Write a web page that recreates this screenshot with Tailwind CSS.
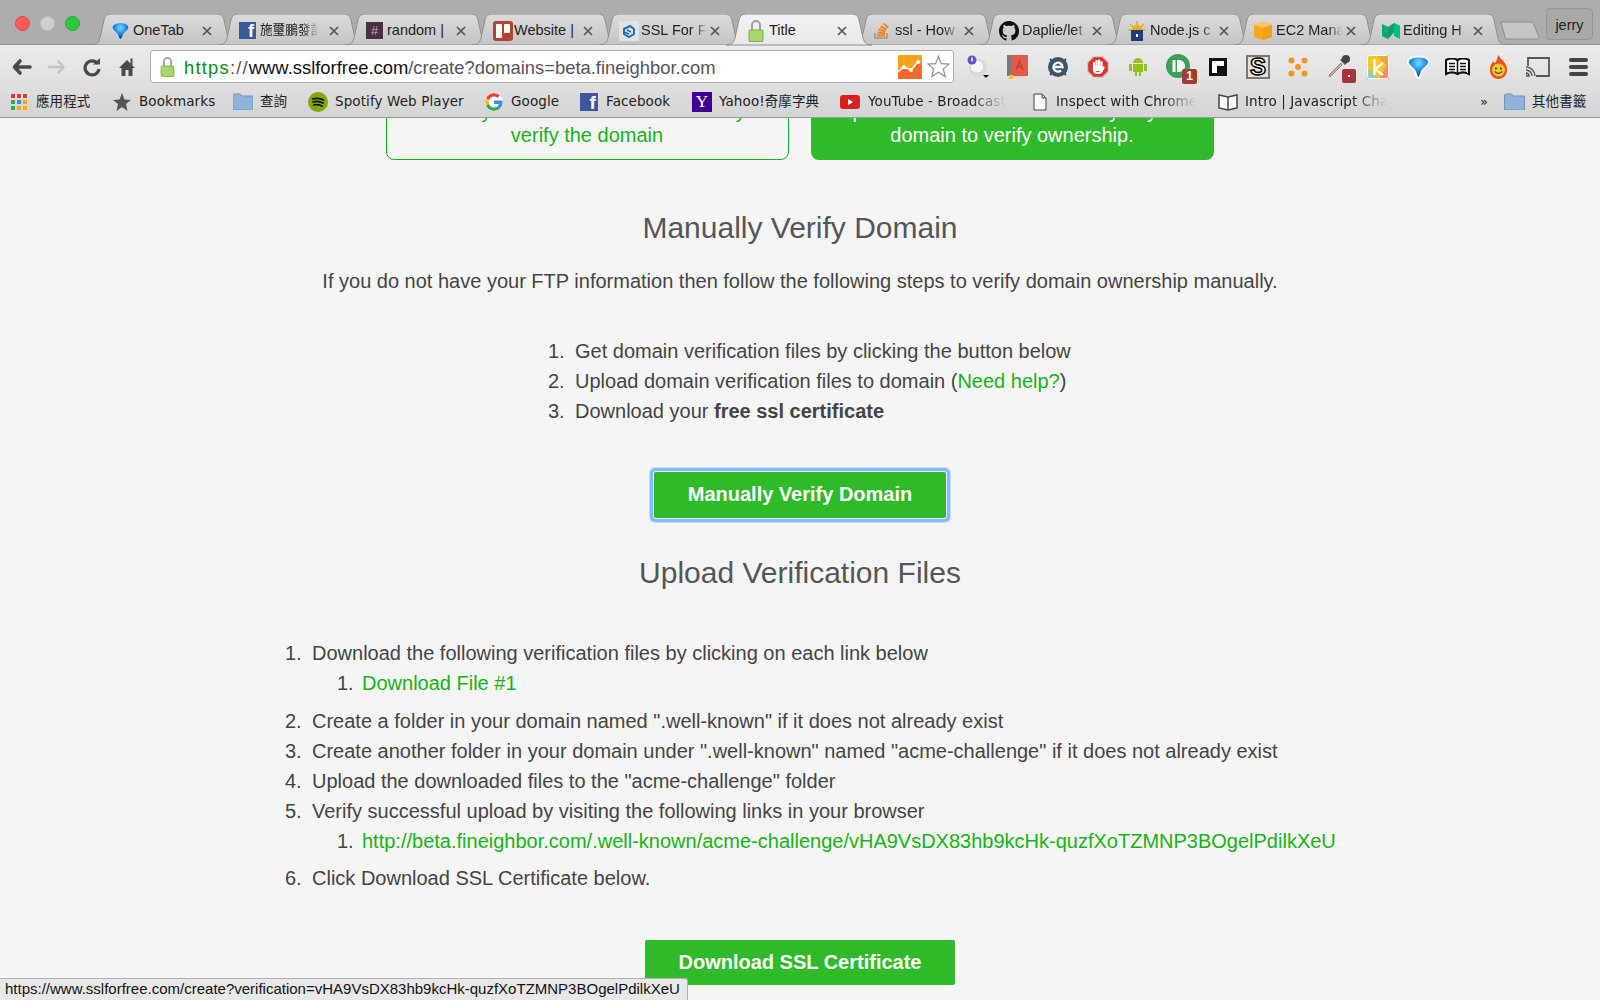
<!DOCTYPE html>
<html lang="en">
<head>
<meta charset="UTF-8">
<title>SSL For Free</title>
<script src="https://cdn.jsdelivr.net/npm/@tailwindcss/browser@4"></script>
</head>
<body class="h-[1000px] overflow-hidden bg-[#f5f5f5] font-['Liberation_Sans','Noto_Sans_CJK_TC',sans-serif]">

<!-- shared defs -->
<svg class="absolute w-0 h-0">
  <defs>
    <linearGradient id="tabBg" x1="0" y1="0" x2="0" y2="1"><stop offset="0" stop-color="#dcdcdc"/><stop offset="1" stop-color="#c4c4c4"/></linearGradient>
    <linearGradient id="tabOn" x1="0" y1="0" x2="0" y2="1"><stop offset="0" stop-color="#f2f2f2"/><stop offset="1" stop-color="#e9e9e9"/></linearGradient>
    <radialGradient id="gem" cx="0.5" cy="0.3" r="0.6"><stop offset="0" stop-color="#7fd8ff"/><stop offset="0.6" stop-color="#1f8fe6"/><stop offset="1" stop-color="#0b4f9e"/></radialGradient>
    <path id="tabShape" d="M0 31C6 31 8 28 9 24L13 6C14 2 16 0 21 0H125C130 0 132 2 133 6L137 24C138 28 140 31 146 31Z"/>
    <path id="close" d="M1 1L9 9M9 1L1 9" fill="none" stroke="#555" stroke-width="1.7"/>
    <path id="funnel" d="M1 7C1 3 6 1 12 1C18 1 23 3 23 7C23 10 19 12 16 16L13.500 22C12.800 23.500 11.200 23.500 10.500 22L8 16C5 12 1 10 1 7Z"/>
  </defs>
</svg>

<!-- tab strip -->
<div class="relative h-[45px] bg-[#adadad] border-b border-[#8f8f8f]">
  <div class="absolute left-[15px] top-[16px] flex gap-[10px]">
    <span class="w-[15px] h-[15px] rounded-full bg-[#fc5b57] border border-[#e24640]"></span>
    <span class="w-[15px] h-[15px] rounded-full bg-[#cfcfcf] border border-[#bdbdbd]"></span>
    <span class="w-[15px] h-[15px] rounded-full bg-[#2ac940] border border-[#1fae30]"></span>
  </div>
  <div class="flex pl-[100px] pt-[14px] text-[14.5px] text-[#222]">
    <!-- OneTab -->
    <div class="relative w-[127px] h-[31px] pt-[2px] shrink-0 flex items-center">
      <svg class="absolute left-[-9px] top-0 w-[146px] h-[31px]" viewBox="0 0 146 31"><use href="#tabShape" fill="url(#tabBg)" stroke="#8e8e8e"/></svg>
      <svg class="relative ml-[12px] w-[17px] h-[18px]" viewBox="0 0 24 24"><use href="#funnel" fill="url(#gem)"/></svg>
      <span class="relative ml-[4px] w-[69px] whitespace-nowrap">OneTab</span>
      <svg class="relative w-[10px] h-[10px]" viewBox="0 0 10 10"><use href="#close"/></svg>
    </div>
    <!-- Facebook -->
    <div class="relative w-[127px] h-[31px] pt-[2px] shrink-0 flex items-center">
      <svg class="absolute left-[-9px] top-0 w-[146px] h-[31px]" viewBox="0 0 146 31"><use href="#tabShape" fill="url(#tabBg)" stroke="#8e8e8e"/></svg>
      <span class="relative ml-[12px] w-[17px] h-[17px] bg-[#3b5998] text-white font-bold text-[18px] leading-[19px] text-right pr-[2px] overflow-hidden">f</span>
      <span class="relative ml-[4px] w-[69px] whitespace-nowrap text-[12.6px] [mask-image:linear-gradient(to_right,black_62%,transparent_88%)]">施璽鵬發訁</span>
      <svg class="relative w-[10px] h-[10px]" viewBox="0 0 10 10"><use href="#close"/></svg>
    </div>
    <!-- Slack -->
    <div class="relative w-[127px] h-[31px] pt-[2px] shrink-0 flex items-center">
      <svg class="absolute left-[-9px] top-0 w-[146px] h-[31px]" viewBox="0 0 146 31"><use href="#tabShape" fill="url(#tabBg)" stroke="#8e8e8e"/></svg>
      <span class="relative ml-[12px] w-[17px] h-[17px] bg-[#4a2f46] text-[#b9a9b6] text-[13px] leading-[17px] text-center">#</span>
      <span class="relative ml-[4px] w-[69px] whitespace-nowrap">random |</span>
      <svg class="relative w-[10px] h-[10px]" viewBox="0 0 10 10"><use href="#close"/></svg>
    </div>
    <!-- Trello -->
    <div class="relative w-[127px] h-[31px] pt-[2px] shrink-0 flex items-center">
      <svg class="absolute left-[-9px] top-0 w-[146px] h-[31px]" viewBox="0 0 146 31"><use href="#tabShape" fill="url(#tabBg)" stroke="#8e8e8e"/></svg>
      <svg class="relative ml-[12px] w-[20px] h-[20px]" viewBox="0 0 20 20"><rect width="20" height="20" rx="3" fill="#b04632"/><rect x="3" y="3" width="6" height="14" rx="1" fill="#fff"/><rect x="11" y="3" width="6" height="9" rx="1" fill="#fff"/></svg>
      <span class="relative ml-[1px] w-[69px] whitespace-nowrap">Website |</span>
      <svg class="relative w-[10px] h-[10px]" viewBox="0 0 10 10"><use href="#close"/></svg>
    </div>
    <!-- SSL For Free -->
    <div class="relative w-[127px] h-[31px] pt-[2px] shrink-0 flex items-center">
      <svg class="absolute left-[-9px] top-0 w-[146px] h-[31px]" viewBox="0 0 146 31"><use href="#tabShape" fill="url(#tabBg)" stroke="#8e8e8e"/></svg>
      <svg class="relative ml-[11px] w-[20px] h-[20px]" viewBox="0 0 20 20"><rect width="20" height="20" fill="#dfe3e6"/><path d="M5 8L11 5L15 8V13L10 16L5 13Z" fill="none" stroke="#1c6fb5" stroke-width="2"/><path d="M8 9L12 11M5 11L10 13" stroke="#1c6fb5" stroke-width="1.500"/></svg>
      <span class="relative ml-[2px] w-[69px] whitespace-nowrap [mask-image:linear-gradient(to_right,black_78%,transparent_95%)]">SSL For F</span>
      <svg class="relative w-[10px] h-[10px]" viewBox="0 0 10 10"><use href="#close"/></svg>
    </div>
    <!-- Active tab -->
    <div class="relative z-10 w-[127px] h-[31px] pt-[2px] shrink-0 flex items-center">
      <svg class="absolute left-[-9px] top-0 w-[146px] h-[32px]" viewBox="0 0 146 32"><use href="#tabShape" fill="url(#tabOn)" stroke="#8e8e8e"/></svg>
      <svg class="relative ml-[13px] w-[16px] h-[22px]" viewBox="0 0 16 22"><path d="M4 10V5A4 4 0 0 1 12 5V10" fill="none" stroke="#a0a0a0" stroke-width="2"/><rect x="1" y="10" width="14" height="11.500" rx="1" fill="#a6d66d" stroke="#7fae4b"/></svg>
      <span class="relative ml-[5px] w-[68px] whitespace-nowrap">Title</span>
      <svg class="relative w-[10px] h-[10px]" viewBox="0 0 10 10"><use href="#close"/></svg>
    </div>
    <!-- Stack Overflow -->
    <div class="relative w-[127px] h-[31px] pt-[2px] shrink-0 flex items-center">
      <svg class="absolute left-[-9px] top-0 w-[146px] h-[31px]" viewBox="0 0 146 31"><use href="#tabShape" fill="url(#tabBg)" stroke="#8e8e8e"/></svg>
      <svg class="relative ml-[12px] w-[17px] h-[17px]" viewBox="0 0 17 17"><path d="M1 11V16H13V11" fill="none" stroke="#999" stroke-width="1.500"/><path d="M3 13.500H11M3.500 10.500L11 11.500M4.500 7.500L11.500 9.500M6.500 4.500L12.500 7.500M9.500 1.500L14 5.500" stroke="#f48024" stroke-width="2"/></svg>
      <span class="relative ml-[4px] w-[69px] whitespace-nowrap [mask-image:linear-gradient(to_right,black_70%,transparent_95%)]">ssl - How</span>
      <svg class="relative w-[10px] h-[10px]" viewBox="0 0 10 10"><use href="#close"/></svg>
    </div>
    <!-- GitHub -->
    <div class="relative w-[127px] h-[31px] pt-[2px] shrink-0 flex items-center">
      <svg class="absolute left-[-9px] top-0 w-[146px] h-[31px]" viewBox="0 0 146 31"><use href="#tabShape" fill="url(#tabBg)" stroke="#8e8e8e"/></svg>
      <svg class="relative ml-[10px] w-[20px] h-[20px]" viewBox="0 0 16 16"><path fill="#111" d="M8 0C3.58 0 0 3.58 0 8c0 3.54 2.29 6.53 5.47 7.59.4.07.55-.17.55-.38 0-.19-.01-.82-.01-1.49-2.01.37-2.53-.49-2.69-.94-.09-.23-.48-.94-.82-1.13-.28-.15-.68-.52-.01-.53.63-.01 1.08.58 1.23.82.72 1.21 1.87.87 2.33.66.07-.52.28-.87.51-1.07-1.78-.2-3.64-.89-3.64-3.95 0-.87.31-1.59.82-2.15-.08-.2-.36-1.02.08-2.12 0 0 .67-.21 2.2.82.64-.18 1.32-.27 2-.27.68 0 1.36.09 2 .27 1.53-1.04 2.2-.82 2.2-.82.44 1.1.16 1.92.08 2.12.51.56.82 1.27.82 2.15 0 3.07-1.87 3.75-3.65 3.95.29.25.54.73.54 1.48 0 1.07-.01 1.93-.01 2.2 0 .21.15.46.55.38A8.013 8.013 0 0016 8c0-4.42-3.58-8-8-8z"/></svg>
      <span class="relative ml-[3px] w-[70px] whitespace-nowrap [mask-image:linear-gradient(to_right,black_75%,transparent_95%)]">Daplie/let</span>
      <svg class="relative w-[10px] h-[10px]" viewBox="0 0 10 10"><use href="#close"/></svg>
    </div>
    <!-- Node.js -->
    <div class="relative w-[127px] h-[31px] pt-[2px] shrink-0 flex items-center">
      <svg class="absolute left-[-9px] top-0 w-[146px] h-[31px]" viewBox="0 0 146 31"><use href="#tabShape" fill="url(#tabBg)" stroke="#8e8e8e"/></svg>
      <svg class="relative ml-[12px] w-[18px] h-[20px]" viewBox="0 0 18 20"><path d="M9 0V4M2 3L5 6M16 3L13 6M0 9H18" stroke="#f5a623" stroke-width="1.600"/><path d="M4 9A5 5 0 0 1 14 9Z" fill="#f5a623"/><rect x="3" y="9" width="12" height="11" fill="#1c3f78"/><rect x="8" y="13" width="2" height="3" fill="#fff"/></svg>
      <span class="relative ml-[4px] w-[69px] whitespace-nowrap [mask-image:linear-gradient(to_right,black_75%,transparent_95%)]">Node.js c</span>
      <svg class="relative w-[10px] h-[10px]" viewBox="0 0 10 10"><use href="#close"/></svg>
    </div>
    <!-- EC2 -->
    <div class="relative w-[127px] h-[31px] pt-[2px] shrink-0 flex items-center">
      <svg class="absolute left-[-9px] top-0 w-[146px] h-[31px]" viewBox="0 0 146 31"><use href="#tabShape" fill="url(#tabBg)" stroke="#8e8e8e"/></svg>
      <svg class="relative ml-[11px] w-[18px] h-[18px]" viewBox="0 0 18 18"><path d="M9 0L18 3V15L9 18L0 15V3Z" fill="#f7a81b"/><path d="M0 3L9 6L18 3L9 0Z" fill="#fbc75c"/><path d="M9 6V18L18 15V3Z" fill="#f0a010"/></svg>
      <span class="relative ml-[4px] w-[70px] whitespace-nowrap [mask-image:linear-gradient(to_right,black_75%,transparent_95%)]">EC2 Mana</span>
      <svg class="relative w-[10px] h-[10px]" viewBox="0 0 10 10"><use href="#close"/></svg>
    </div>
    <!-- Medium -->
    <div class="relative w-[127px] h-[31px] pt-[2px] shrink-0 flex items-center">
      <svg class="absolute left-[-9px] top-0 w-[146px] h-[31px]" viewBox="0 0 146 31"><use href="#tabShape" fill="url(#tabBg)" stroke="#8e8e8e"/></svg>
      <svg class="relative ml-[12px] w-[18px] h-[16px]" viewBox="0 0 18 16"><path d="M0 1L6 4V16L0 13Z" fill="#00ab6c"/><path d="M6 4L12 0L18 3L6 16Z" fill="#1c9963"/><path d="M12 0L18 3V16L12 13Z" fill="#00c27c"/></svg>
      <span class="relative ml-[3px] w-[70px] whitespace-nowrap [mask-image:linear-gradient(to_right,black_78%,transparent_95%)]">Editing H</span>
      <svg class="relative w-[10px] h-[10px]" viewBox="0 0 10 10"><use href="#close"/></svg>
    </div>
    <!-- new tab -->
    <svg class="relative ml-[3px] mt-[7px] w-[40px] h-[19px]" viewBox="0 0 40 19"><path d="M1 1H30C32 1 33 2 34 4L39 16C39 18 38 18 36 18H8C6 18 5 17 5 16Z" fill="#c6c6c6" stroke="#8e8e8e"/></svg>
  </div>
  <div class="absolute left-[1546px] top-[8px] w-[47px] h-[32px] rounded-[4px] bg-[#a9a9a9] border border-[#969696] text-[14.5px] leading-[32px] text-center text-[#222]">jerry</div>
</div>

<!-- toolbar -->
<div class="h-[43px] flex items-center pl-[12px] bg-[linear-gradient(#ececec,#dedede)]">
  <svg class="w-[20px] h-[20px]" viewBox="0 0 20 20"><path d="M8 4L2.500 10L8 16M3 10H18" fill="none" stroke="#4a4a4a" stroke-width="3.600" stroke-linecap="round" stroke-linejoin="round"/></svg>
  <svg class="ml-[15px] w-[19px] h-[20px]" viewBox="0 0 20 20"><path d="M12 4L17.500 10L12 16M17 10H2" fill="none" stroke="#c4c4c4" stroke-width="2.600" stroke-linecap="round" stroke-linejoin="round"/></svg>
  <svg class="ml-[17px] w-[18px] h-[20px]" viewBox="0 0 18 20"><path d="M14.500 6.500A7 7 0 1 0 16 12" fill="none" stroke="#4a4a4a" stroke-width="3.200"/><path d="M10 7.500H17V1Z" fill="#4a4a4a"/></svg>
  <svg class="ml-[18px] w-[16px] h-[18px]" viewBox="0 0 16 18"><path d="M8 2L0 10H2.500V18H6.500V12H9.500V18H13.500V10H16L13.500 7.500V0.500H11.500V5.500Z" fill="#4a4a4a"/></svg>
  <!-- address bar -->
  <div class="ml-[15px] w-[804px] h-[33px] flex items-center bg-white border border-[#ababab] rounded-[3px]">
    <svg class="ml-[9px] w-[15px] h-[20px]" viewBox="0 0 16 22"><path d="M4 10V5A4 4 0 0 1 12 5V10" fill="none" stroke="#a0a0a0" stroke-width="2"/><rect x="1" y="10" width="14" height="11.500" rx="1" fill="#a6d66d" stroke="#7fae4b"/></svg>
    <div class="ml-[9px] pt-[3px] text-[18.4px] whitespace-nowrap text-[#555]"><span class="tracking-[1.2px]"><span class="text-[#0b8a0b]">https</span>://</span><span class="text-[#111]">www.sslforfree.com</span>/create?domains=beta.fineighbor.com</div>
    <svg class="ml-auto w-[24px] h-[24px]" viewBox="0 0 24 24"><rect width="24" height="24" rx="1" fill="#f9a11b"/><path d="M0 24V17L6 12L13 15L20 7L24 10V24Z" fill="#f2692a"/><path d="M0 17L6 12L13 15L20 7" fill="none" stroke="#fff" stroke-width="1.600"/><circle cx="6" cy="12" r="2" fill="#fff"/><circle cx="13" cy="15" r="2" fill="#fff"/><circle cx="20" cy="7" r="2" fill="#fff"/></svg>
    <svg class="ml-[5px] mr-[3px] w-[23px] h-[23px]" viewBox="0 0 24 24"><path d="M12 1.500L15 9L23 9.500L17 14.500L19 22.500L12 18L5 22.500L7 14.500L1 9.500L9 9Z" fill="#fff" stroke="#8f8f8f" stroke-width="1.300"/></svg>
  </div>
  <!-- extensions -->
  <svg class="ml-[12px] w-[24px] h-[24px]" viewBox="0 0 24 24"><circle cx="12" cy="13" r="9" fill="#d8d8d8"/><circle cx="11" cy="11.500" r="6" fill="#f6f6f6"/><circle cx="6" cy="5" r="4.500" fill="#5a55d6"/><rect x="5.300" y="2.500" width="1.500" height="4" fill="#fff"/><path d="M17 20H23L20 23Z" fill="#111"/></svg>
  <svg class="ml-[17px] w-[21px] h-[24px]" viewBox="0 0 21 24"><rect x="0" y="0" width="5" height="21" fill="#7a7a7a"/><rect x="4" y="0" width="17" height="21" fill="#e65a4a"/><path d="M9 15L12.500 6L16 15M10.500 12H14.500" fill="none" stroke="#c8402f" stroke-width="1.500"/><rect x="0" y="21" width="21" height="3" fill="#f4d3cc"/><path d="M2 20H6V24H2Z" fill="#f5c518"/></svg>
  <svg class="ml-[18px] w-[24px] h-[24px]" viewBox="0 0 24 24"><path d="M4 4L7 7M20 4L17 7M4 20L7 17M20 20L17 17" stroke="#39576a" stroke-width="2"/><circle cx="12" cy="12" r="10" fill="#39576a"/><path d="M7.500 12H16.500A4.500 4.500 0 1 0 15 15.500" fill="none" stroke="#fff" stroke-width="2.400"/></svg>
  <svg class="ml-[17px] w-[22px] h-[22px]" viewBox="0 0 22 22"><path d="M6.500 0.500H15.500L21.500 6.500V15.500L15.500 21.500H6.500L0.500 15.500V6.500Z" fill="#d9352c" stroke="#c9c9c9" stroke-width="1.500"/><path d="M7 12V7M9.500 11V5M12 11V4.500M14.500 11V6M7 11V14C7 16 8.500 17 10.500 17H12C14 17 15 15 16.500 11.500" fill="none" stroke="#fff" stroke-width="2.200" stroke-linecap="round"/><rect x="8" y="10" width="7" height="5" fill="#fff"/></svg>
  <svg class="ml-[20px] w-[18px] h-[20px]" viewBox="0 0 18 20"><path d="M4 6A5 5 0 0 1 14 6ZM4 7H14V15H12V19H10V15H8V19H6V15H4ZM0 7H3V14H0ZM15 7H18V14H15Z" fill="#8fc31f"/></svg>
  <div class="relative ml-[19px] w-[31px] h-[30px] mt-[5px]">
    <svg class="w-[24px] h-[24px]" viewBox="0 0 24 24"><circle cx="12" cy="12" r="12" fill="#3d9e55"/><rect x="6.500" y="6" width="3" height="12" fill="#fff"/><path d="M11 6H13A6 6 0 0 1 13 18H11Z" fill="#fff"/></svg>
    <span class="absolute left-[16px] top-[15px] w-[15px] h-[15px] bg-[#a63a2e] text-white font-bold text-[12px] leading-[15px] text-center rounded-[2px]">1</span>
  </div>
  <svg class="ml-[12px] w-[18px] h-[18px]" viewBox="0 0 18 18"><rect width="18" height="18" fill="#111"/><path d="M3 3H15V8H8V15H3Z" fill="#fff"/></svg>
  <span class="ml-[19px] w-[24px] h-[24px] bg-[#e6e2d8] border-2 border-[#777] text-white font-bold text-[24px] leading-[20px] text-center [-webkit-text-stroke:1.5px_#000]">S</span>
  <svg class="ml-[18px] w-[20px] h-[20px]" viewBox="0 0 20 20"><g fill="#f7941d"><circle cx="3.500" cy="3.500" r="3"/><circle cx="16.500" cy="3.500" r="3"/><circle cx="10" cy="10" r="3"/><circle cx="3.500" cy="16.500" r="3"/><circle cx="16.500" cy="16.500" r="3"/></g></svg>
  <div class="relative ml-[19px] w-[29px] h-[30px] mt-[4px]">
    <svg class="w-[24px] h-[24px]" viewBox="0 0 24 24"><path d="M14 9L2 21L3 23L15 11Z" fill="#e8a0a0" stroke="#888"/><path d="M13 6L18 11L20 9L15 4Z" fill="#555"/><circle cx="19" cy="5" r="4" fill="#444"/></svg>
    <span class="absolute left-[15px] top-[15px] w-[14px] h-[14px] bg-[#a6343a] rounded-[2px]"></span>
    <span class="absolute left-[21px] top-[21px] w-[2px] h-[2px] bg-white"></span>
  </div>
  <svg class="ml-[11px] w-[22px] h-[24px]" viewBox="0 0 22 24"><rect width="22" height="24" rx="2" fill="#f6c52c"/><path d="M9 0H22V12Z" fill="#f3a33a"/><path d="M22 6V24H12Z" fill="#f08a6b"/><path d="M0 24V13L12 24Z" fill="#8fd0c4"/><rect x="0.500" y="0.500" width="21" height="23" rx="2" fill="none" stroke="#fff"/><path d="M7.500 4V20M16 8L8 14L16 20" fill="none" stroke="#fff" stroke-width="2.200"/></svg>
  <svg class="ml-[18px] w-[23px] h-[24px]" viewBox="0 0 24 24"><use href="#funnel" fill="url(#gem)" stroke="#fff" stroke-width="2"/></svg>
  <svg class="ml-[15px] w-[25px] h-[18px]" viewBox="0 0 25 18"><path d="M1 2C5 0 9 0 12.500 2C16 0 20 0 24 2V16C20 14 16 14 12.500 16C9 14 5 14 1 16Z" fill="#fff" stroke="#111" stroke-width="2.200"/><path d="M12.500 2V16M4 5.500H10M4 8.500H10M4 11.500H10M15 5.500H21M15 8.500H21M15 11.500H21" stroke="#111" stroke-width="1.500"/></svg>
  <svg class="ml-[19px] w-[19px] h-[24px]" viewBox="0 0 19 24"><path d="M9.500 0C11 4 17 7 18 13C19 20 14 24 9.500 24C5 24 0 20 1 13C1.500 10 3 9 4 6C5 8 6 8 7 7C8 5 8 2 9.500 0Z" fill="#e8501e"/><circle cx="9.500" cy="15" r="6.500" fill="#fbc531"/><circle cx="7" cy="13.500" r="1" fill="#333"/><circle cx="12" cy="13.500" r="1" fill="#333"/><path d="M6 16.500C7.500 19 11.500 19 13 16.500" fill="none" stroke="#333" stroke-width="1.100"/></svg>
  <svg class="ml-[18px] w-[24px] h-[20px]" viewBox="0 0 24 20"><path d="M2 9V1H23V19H10" fill="none" stroke="#555" stroke-width="1.800"/><path d="M0 19H3A3 3 0 0 0 0 16ZM0 13A6 6 0 0 1 6 19M0 10A9 9 0 0 1 9 19" fill="none" stroke="#555" stroke-width="1.400"/></svg>
  <div class="ml-[19px] w-[19px] flex flex-col gap-[3px]">
    <span class="h-[4px] rounded-full bg-[#444]"></span>
    <span class="h-[4px] rounded-full bg-[#444]"></span>
    <span class="h-[4px] rounded-full bg-[#444]"></span>
  </div>
</div>

<!-- bookmarks bar -->
<div class="h-[30px] pb-[2px] flex items-center pl-[11px] bg-[linear-gradient(#dedede,#d4d4d4)] border-b border-[#9c9c9c] font-['DejaVu_Sans','Noto_Sans_CJK_TC',sans-serif] text-[13.5px] tracking-[0.1px] text-[#222] whitespace-nowrap">
  <div class="w-[102px] shrink-0 flex items-center gap-[9px]">
    <svg class="w-[16px] h-[16px]" viewBox="0 0 16 16"><rect width="4" height="4" fill="#e0392b"/><rect x="6" width="4" height="4" fill="#e0392b"/><rect x="12" width="4" height="4" fill="#e0392b"/><rect y="6" width="4" height="4" fill="#34a853"/><rect x="6" y="6" width="4" height="4" fill="#4285f4"/><rect x="12" y="6" width="4" height="4" fill="#f9ab00"/><rect y="12" width="4" height="4" fill="#34a853"/><rect x="6" y="12" width="4" height="4" fill="#f9ab00"/><rect x="12" y="12" width="4" height="4" fill="#f9ab00"/></svg>
    <span>應用程式</span>
  </div>
  <div class="w-[120px] shrink-0 flex items-center gap-[8px]">
    <svg class="w-[18px] h-[18px]" viewBox="0 0 18 18"><path d="M9 0L11.500 6.500L18 7L13 11L14.500 18L9 14L3.500 18L5 11L0 7L6.500 6.500Z" fill="#555"/></svg>
    <span>Bookmarks</span>
  </div>
  <div class="w-[75px] shrink-0 flex items-center gap-[7px]">
    <svg class="w-[20px] h-[17px]" viewBox="0 0 20 17"><path d="M0 3C0 1 1 1 2 1H7L9 3H20V17H0Z" fill="#8fb4d9" stroke="#6f94b8"/></svg>
    <span>查詢</span>
  </div>
  <div class="w-[177px] shrink-0 flex items-center gap-[7px]">
    <svg class="w-[20px] h-[20px]" viewBox="0 0 20 20"><circle cx="10" cy="10" r="10" fill="#7fa800"/><path d="M4.500 7C8 6 12 6 15.500 8M5 10C8 9 12 9.500 15 11M5.500 13C8 12.300 11.500 12.500 14 14" fill="none" stroke="#111" stroke-width="1.700" stroke-linecap="round"/></svg>
    <span>Spotify Web Player</span>
  </div>
  <div class="w-[95px] shrink-0 flex items-center gap-[8px]">
    <svg class="w-[18px] h-[18px] rounded-full bg-white" viewBox="0 0 48 48"><path fill="#EA4335" d="M24 9.500c3.500 0 6.700 1.300 9.100 3.500l6.800-6.800C35.800 2.400 30.200 0 24 0 14.600 0 6.500 5.400 2.600 13.200l7.900 6.100C12.400 13.700 17.700 9.500 24 9.500z"/><path fill="#4285F4" d="M47 24.500c0-1.600-.2-3.100-.4-4.500H24v9h12.900c-.6 3-2.300 5.500-4.800 7.200l7.700 6C44.300 37.900 47 31.800 47 24.500z"/><path fill="#FBBC05" d="M10.500 28.700c-.5-1.500-.8-3-.8-4.700s.3-3.200.8-4.700l-7.900-6.100C.9 16.500 0 20.100 0 24s.9 7.500 2.600 10.800l7.900-6.100z"/><path fill="#34A853" d="M24 48c6.500 0 11.900-2.100 15.900-5.800l-7.700-6c-2.200 1.400-4.900 2.300-8.200 2.300-6.300 0-11.600-4.200-13.500-9.900l-7.900 6.100C6.500 42.600 14.600 48 24 48z"/></svg>
    <span>Google</span>
  </div>
  <div class="w-[112px] shrink-0 flex items-center gap-[8px]">
    <span class="w-[18px] h-[18px] bg-[#3b5998] text-white font-bold text-[19px] leading-[20px] text-right pr-[2px] overflow-hidden font-['Liberation_Sans']">f</span>
    <span>Facebook</span>
  </div>
  <div class="w-[148px] shrink-0 flex items-center gap-[7px]">
    <span class="w-[20px] h-[20px] bg-[#410093] text-white text-[17px] leading-[20px] text-center font-['Liberation_Serif']">Y</span>
    <span>Yahoo!奇摩字典</span>
  </div>
  <div class="w-[193px] shrink-0 flex items-center gap-[8px]">
    <svg class="w-[20px] h-[14px]" viewBox="0 0 20 14"><rect width="20" height="14" rx="3" fill="#d9201c"/><path d="M8 4L13 7L8 10Z" fill="#fff"/></svg>
    <span class="[mask-image:linear-gradient(to_right,black_75%,transparent)]">YouTube - Broadcast</span>
  </div>
  <div class="w-[185px] shrink-0 flex items-center gap-[9px]">
    <svg class="w-[14px] h-[18px]" viewBox="0 0 14 18"><path d="M1 1H9L13 5V17H1ZM9 1V5H13" fill="#fafafa" stroke="#444"/></svg>
    <span class="[mask-image:linear-gradient(to_right,black_75%,transparent)]">Inspect with Chrome</span>
  </div>
  <div class="w-[262px] shrink-0 flex items-center gap-[7px]">
    <svg class="w-[20px] h-[18px]" viewBox="0 0 20 18"><path d="M1 2L10 4L19 2V15L10 17L1 15Z" fill="#fafafa" stroke="#444" stroke-width="1.500"/><path d="M10 4V17" stroke="#444" stroke-width="1.500"/></svg>
    <span class="[mask-image:linear-gradient(to_right,black_75%,transparent)]">Intro | Javascript Cha</span>
  </div>
  <span class="w-[24px] shrink-0 text-[13px]">»</span>
  <div class="shrink-0 flex items-center gap-[7px]">
    <svg class="w-[21px] h-[17px]" viewBox="0 0 20 17"><path d="M0 3C0 1 1 1 2 1H7L9 3H20V17H0Z" fill="#8fb4d9" stroke="#6f94b8"/></svg>
    <span>其他書籤</span>
  </div>
</div>

<!-- page -->
<main class="relative h-[882px] overflow-hidden bg-[#f5f5f5] text-[20px] leading-[30px] text-[#444]">
  <div class="mt-[-40px] flex justify-center gap-[22px] pr-[1px] text-[20px] leading-[24px] text-center">
    <div class="w-[403px] h-[82px] pt-[20px] rounded-b-[8px] border border-[#17b317] text-[#17b317]">Enter your FTP info to automatically<br>verify the domain</div>
    <div class="w-[403px] h-[82px] pt-[21px] rounded-b-[8px] bg-[#2fba2a] text-white">Upload verification file manually to your<br>domain to verify ownership.</div>
  </div>

  <h2 class="mt-[49px] text-center text-[30px] leading-[38px] text-[#555]">Manually Verify Domain</h2>
  <p class="mt-[19px] text-center">If you do not have your FTP information then follow the following steps to verify domain ownership manually.</p>

  <ol class="mt-[40px] ml-[548px] list-none">
    <li><span class="inline-block w-[27px]">1.</span>Get domain verification files by clicking the button below</li>
    <li><span class="inline-block w-[27px]">2.</span>Upload domain verification files to domain (<a class="text-[#17b317]">Need help?</a>)</li>
    <li><span class="inline-block w-[27px]">3.</span>Download your <b>free ssl certificate</b></li>
  </ol>

  <div class="mt-[46px] flex justify-center">
    <button class="w-[292px] h-[46px] pb-[2px] bg-[#2fba2a] text-white font-bold rounded-[2px] shadow-[0_0_0_1px_#e6f0ff,0_0_0_4px_#86bbfb,0_0_0_5px_#c4dcfb]">Manually Verify Domain</button>
  </div>

  <h2 class="mt-[36px] text-center text-[30px] leading-[38px] text-[#555]">Upload Verification Files</h2>

  <ol class="mt-[46px] ml-[285px] list-none">
    <li><span class="inline-block w-[27px]">1.</span>Download the following verification files by clicking on each link below
      <ol class="pl-[52px] mb-[8px] list-none"><li><span class="inline-block w-[25px]">1.</span><a class="text-[#17b317]">Download File #1</a></li></ol>
    </li>
    <li><span class="inline-block w-[27px]">2.</span>Create a folder in your domain named ".well-known" if it does not already exist</li>
    <li><span class="inline-block w-[27px]">3.</span>Create another folder in your domain under ".well-known" named "acme-challenge" if it does not already exist</li>
    <li><span class="inline-block w-[27px]">4.</span>Upload the downloaded files to the "acme-challenge" folder</li>
    <li><span class="inline-block w-[27px]">5.</span>Verify successful upload by visiting the following links in your browser
      <ol class="pl-[52px] mb-[7px] list-none"><li><span class="inline-block w-[25px]">1.</span><a class="text-[#17b317]">http://beta.fineighbor.com/.well-known/acme-challenge/vHA9VsDX83hb9kcHk-quzfXoTZMNP3BOgelPdilkXeU</a></li></ol>
    </li>
    <li><span class="inline-block w-[27px]">6.</span>Click Download SSL Certificate below.</li>
  </ol>

  <div class="mt-[47px] flex justify-center">
    <button class="w-[310px] h-[45px] pb-[2px] bg-[#2fba2a] text-white font-bold rounded-[2px]">Download SSL Certificate</button>
  </div>
</main>

<!-- link status bubble -->
<div class="absolute left-0 bottom-0 w-[688px] h-[22px] pl-[5px] bg-[#e8e8e8] border-t border-r border-[#b0b0b0] rounded-tr-[3px] text-[15px] leading-[20px] text-[#111] whitespace-nowrap">https://www.sslforfree.com/create?verification=vHA9VsDX83hb9kcHk-quzfXoTZMNP3BOgelPdilkXeU</div>

</body>
</html>
